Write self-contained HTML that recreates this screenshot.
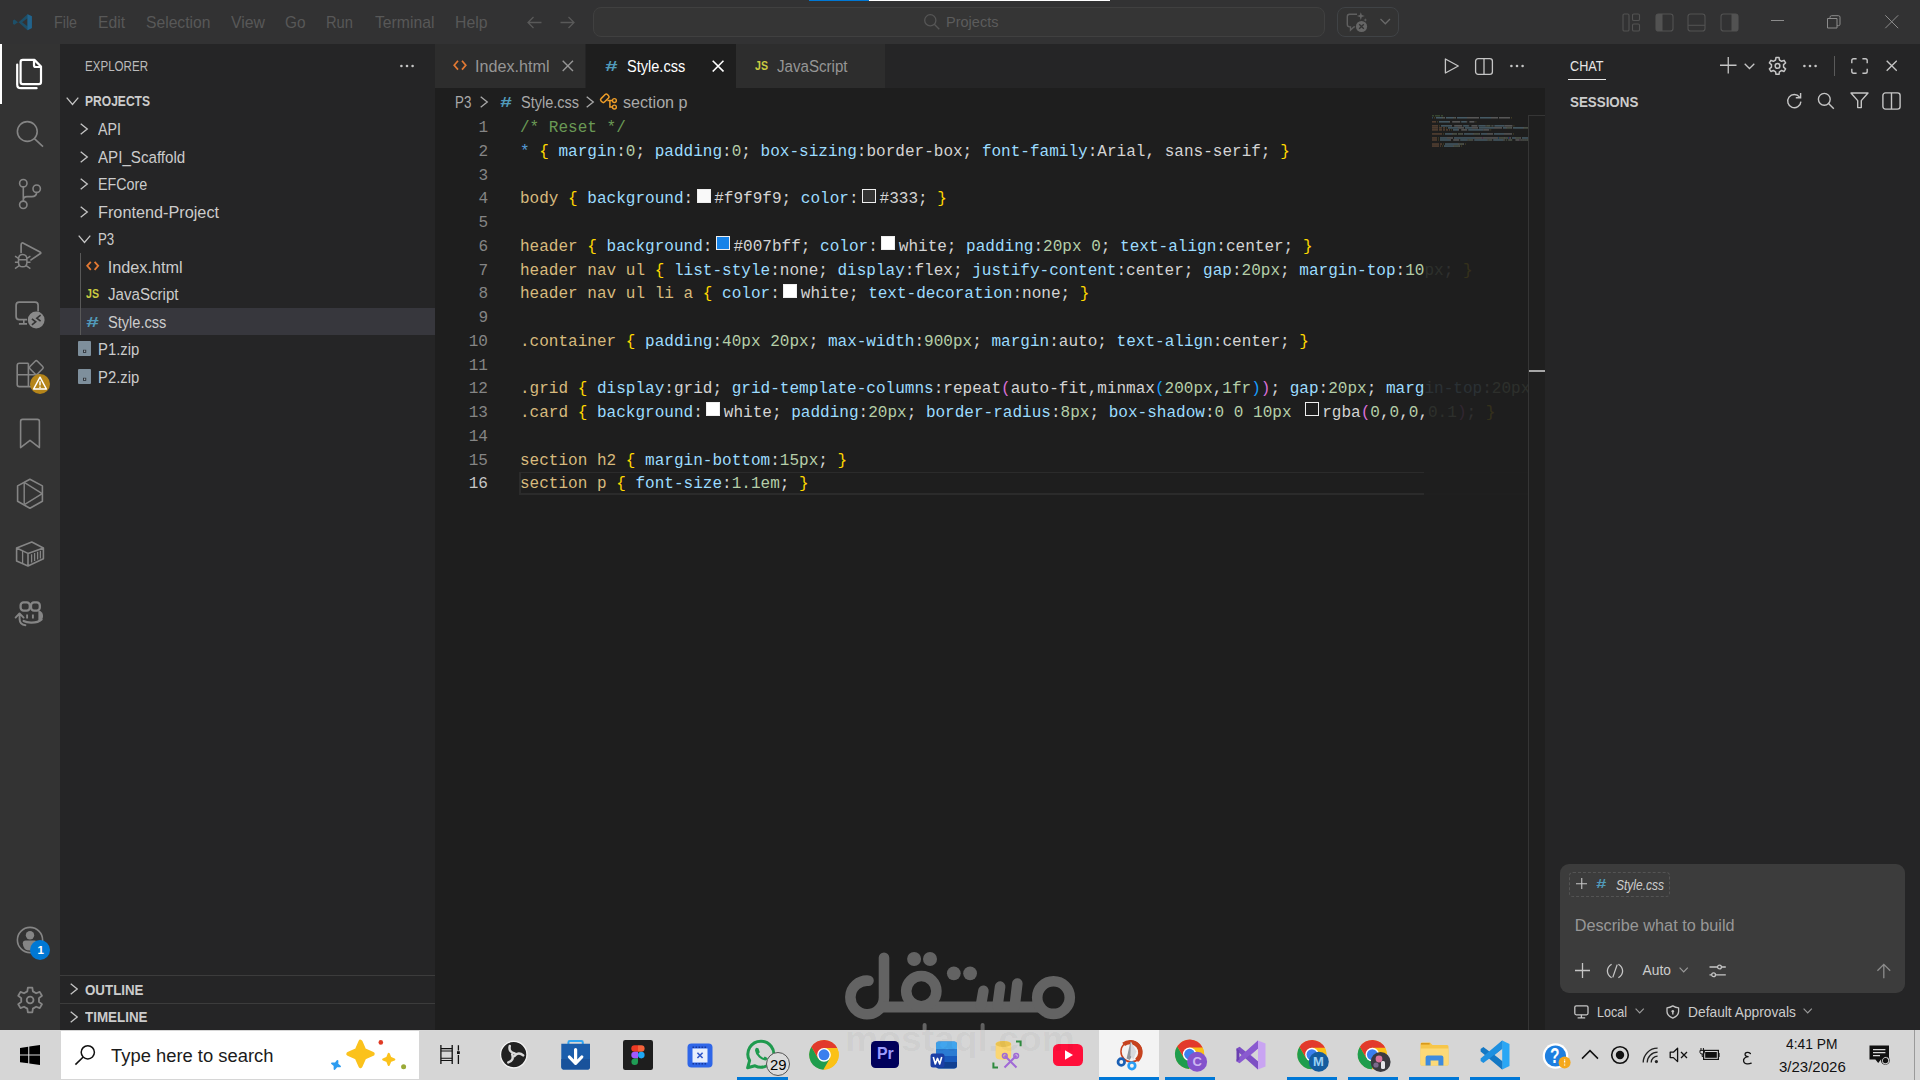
<!DOCTYPE html><html><head><meta charset="utf-8"><title>Style.css - Projects</title><style>
html,body{margin:0;padding:0;background:#1e1e1e;}
body{width:1920px;height:1080px;overflow:hidden;position:relative;font-family:"Liberation Sans",sans-serif;}
.b{position:absolute;display:block;}
.t{position:absolute;white-space:pre;transform-origin:0 50%;font-family:"Liberation Sans",sans-serif;}
.cl{position:absolute;left:520px;white-space:pre;font-family:"Liberation Mono",monospace;font-size:16.04px;line-height:23.75px;height:23.75px;color:#d4d4d4;}
.ln{position:absolute;left:436px;width:52px;text-align:right;font-family:"Liberation Mono",monospace;font-size:16.04px;line-height:23.75px;height:23.75px;}
.sw{display:inline-block;width:14px;height:14px;margin:0 3.5px 0 3.5px;box-sizing:border-box;border:1.2px solid #eee;vertical-align:0.7px;}
.s{color:#d7ba7d}.b_{color:#ffd700}.p{color:#9cdcfe}.d{color:#d4d4d4}.n{color:#b5cea8}.c{color:#6a9955}.w{color:#569cd6}.p1{color:#da70d6}.p2{color:#179fff}
</style></head><body><div class="b" style="left:0px;top:0px;width:1920px;height:44px;background:#323233;"></div><div class="b" style="left:0px;top:44px;width:60px;height:986px;background:#333333;"></div><div class="b" style="left:60px;top:44px;width:375px;height:986px;background:#252526;"></div><div class="b" style="left:435px;top:44px;width:1110px;height:44px;background:#252526;"></div><div class="b" style="left:435px;top:88px;width:1110px;height:942px;background:#1e1e1e;"></div><div class="b" style="left:1545px;top:44px;width:375px;height:986px;background:#252526;"></div><div class="b" style="left:809px;top:0px;width:60px;height:1px;background:#0078d4;"></div><div class="b" style="left:869px;top:0px;width:241px;height:1px;background:#ffffff;"></div><span class="t" style="left:54px;top:11.96px;font-size:16.2px;line-height:21.06px;color:#585858;transform:scaleX(0.8811);">File</span><span class="t" style="left:98px;top:11.96px;font-size:16.2px;line-height:21.06px;color:#585858;transform:scaleX(0.9672);">Edit</span><span class="t" style="left:145.5px;top:11.96px;font-size:16.2px;line-height:21.06px;color:#585858;transform:scaleX(0.9678);">Selection</span><span class="t" style="left:230.5px;top:11.96px;font-size:16.2px;line-height:21.06px;color:#585858;transform:scaleX(0.9764);">View</span><span class="t" style="left:285px;top:11.96px;font-size:16.2px;line-height:21.06px;color:#585858;transform:scaleX(0.9486);">Go</span><span class="t" style="left:326px;top:11.96px;font-size:16.2px;line-height:21.06px;color:#585858;transform:scaleX(0.9085);">Run</span><span class="t" style="left:374.5px;top:11.96px;font-size:16.2px;line-height:21.06px;color:#585858;transform:scaleX(0.9719);">Terminal</span><span class="t" style="left:454.5px;top:11.96px;font-size:16.2px;line-height:21.06px;color:#585858;transform:scaleX(0.9754);">Help</span><svg class="b" style="left:11.7px;top:11.6px;" width="20.8" height="20.4" viewBox="0 0 100 100"><path d="M74.9 10.6 30.2 51.4 11.4 37.1 3.6 41.1v18.2l7.8 3.6 18.8-14.3 44.7 40.8 21.5-10.4V21zM75 30.2v39.6L48.6 50z" fill="#1d4f68" fill-rule="evenodd"/><path d="M74.9 10.6 96.4 21V79L74.9 89.4z" fill="#22638c"/></svg><svg class="b" style="left:526px;top:14px;" width="17" height="17" viewBox="0 0 17 17"><path d="M15.5 8.5H2M7.5 3 2 8.5 7.5 14" fill="none" stroke="#595959" stroke-width="1.3"/></svg><svg class="b" style="left:558.5px;top:14px;" width="17" height="17" viewBox="0 0 17 17"><path d="M1.5 8.5H15M9.5 3 15 8.5 9.5 14" fill="none" stroke="#595959" stroke-width="1.3"/></svg><div class="b" style="left:593.3px;top:7px;width:731.5px;height:30px;background:#353535;border:1px solid #404040;border-radius:8px;box-sizing:border-box;"></div><svg class="b" style="left:922px;top:12px;" width="20" height="20" viewBox="0 0 20 20"><circle cx="8.3" cy="8.3" r="5.6" fill="none" stroke="#565656" stroke-width="1.3"/><path d="M12.3 12.3 17.3 17.3" stroke="#565656" stroke-width="1.3"/></svg><span class="t" style="left:945.5px;top:11.75px;font-size:15.4px;line-height:20.02px;color:#5c5c5c;transform:scaleX(0.9437);">Projects</span><div class="b" style="left:1337px;top:7px;width:62px;height:30px;background:#333333;border:1px solid #404346;border-radius:8px;box-sizing:border-box;"></div><svg class="b" style="left:1345px;top:11px;" width="26" height="22" viewBox="0 0 26 22"><path d="M12 3.3H4.6Q2.3 3.3 2.3 5.6v8q0 2.3 2.3 2.3h.9v3.2l3.4-3.2h1.2" fill="none" stroke="#606060" stroke-width="1.4"/><path d="M15.8 1.2l1 2.9 2.9 1-2.9 1-1 2.9-1-2.9-2.9-1 2.9-1z" fill="#636363"/><path d="M20.3 7.2l.5 1.3 1.3.5-1.3.5-.5 1.3-.5-1.3-1.3-.5 1.3-.5z" fill="#636363"/><circle cx="16.5" cy="15.5" r="5.6" fill="#666666"/><path d="M14.2 13.2l4.6 4.6M18.8 13.2l-4.6 4.6" stroke="#333" stroke-width="1.3"/></svg><svg class="b" style="left:1379px;top:17px;" width="13" height="9" viewBox="0 0 13 9"><path d="M1.5 2 6.3 6.8 11 2" fill="none" stroke="#6a6a6a" stroke-width="1.3"/></svg><svg class="b" style="left:1622px;top:12.5px;" width="19" height="19" viewBox="0 0 19 19"><rect x="1" y="1" width="6" height="17" rx="1.3" fill="none" stroke="#525252" stroke-width="1.1"/><rect x="10.5" y="1" width="7" height="6.5" rx="1.3" fill="none" stroke="#525252" stroke-width="1.1"/><rect x="10.5" y="11" width="7" height="7" rx="1.3" fill="none" stroke="#525252" stroke-width="1.1"/></svg><svg class="b" style="left:1654.5px;top:12.5px;" width="19" height="19" viewBox="0 0 19 19"><rect x="1" y="1" width="17" height="17" rx="2.6" fill="none" stroke="#525252" stroke-width="1.1"/><path d="M3.6 1H7.5V18H3.6Q1 18 1 15.4V3.6Q1 1 3.6 1z" fill="#525252"/></svg><svg class="b" style="left:1687px;top:12.5px;" width="19" height="19" viewBox="0 0 19 19"><rect x="1" y="1" width="17" height="17" rx="2.6" fill="none" stroke="#525252" stroke-width="1.1"/><path d="M1 12.3H18" stroke="#525252" stroke-width="1.1"/></svg><svg class="b" style="left:1719.5px;top:12.5px;" width="19" height="19" viewBox="0 0 19 19"><rect x="1" y="1" width="17" height="17" rx="2.6" fill="none" stroke="#525252" stroke-width="1.1"/><path d="M15.4 1H11.5V18H15.4Q18 18 18 15.4V3.6Q18 1 15.4 1z" fill="#525252"/></svg><div class="b" style="left:1771px;top:20px;width:13px;height:1px;background:#8c8c8c;"></div><svg class="b" style="left:1826px;top:14px;" width="16" height="15" viewBox="0 0 16 15"><path d="M1.5 4.5h9.5v9.5H1.5z" fill="none" stroke="#8c8c8c" stroke-width="1"/><path d="M4 4.5V3.3Q4 1.7 5.6 1.7h6.9q1.5 0 1.5 1.5v7q0 1.5-1.5 1.5H11" fill="none" stroke="#8c8c8c" stroke-width="1"/></svg><svg class="b" style="left:1884px;top:14px;" width="16" height="16" viewBox="0 0 16 16"><path d="M1.3 1.3 14.2 14.2M14.2 1.3 1.3 14.2" stroke="#8c8c8c" stroke-width="1"/></svg><span class="t" style="left:85px;top:57.60px;font-size:13.75px;line-height:17.88px;color:#bbbbbb;transform:scaleX(0.8412);">EXPLORER</span><svg class="b" style="left:397.5px;top:63px;" width="18" height="6" viewBox="0 0 18 6"><circle cx="3.4000000000000004" cy="3" r="1.3" fill="#c5c5c5"/><circle cx="9.0" cy="3" r="1.3" fill="#c5c5c5"/><circle cx="14.6" cy="3" r="1.3" fill="#c5c5c5"/></svg><svg class="b" style="left:66px;top:97.3px;" width="13" height="9.0" viewBox="0 0 13 9.0"><path d="M0.7 0.7 6.5 7.5 12.3 0.7" fill="none" stroke="#c5c5c5" stroke-width="1.3"/></svg><span class="t" style="left:85.3px;top:93.20px;font-size:13.75px;line-height:17.88px;color:#cccccc;font-weight:700;transform:scaleX(0.8770);">PROJECTS</span><div class="b" style="left:60px;top:308px;width:375px;height:27px;background:#37373d;"></div><svg class="b" style="left:80px;top:123.30000000000001px;" width="8.8" height="12" viewBox="0 0 8.8 12"><path d="M0.7 0.7 7.3 6.0 0.7 11.3" fill="none" stroke="#c5c5c5" stroke-width="1.3"/></svg><span class="t" style="left:98px;top:119.21px;font-size:16.25px;line-height:21.12px;color:#cccccc;transform:scaleX(0.8743);">API</span><svg class="b" style="left:80px;top:150.8px;" width="8.8" height="12" viewBox="0 0 8.8 12"><path d="M0.7 0.7 7.3 6.0 0.7 11.3" fill="none" stroke="#c5c5c5" stroke-width="1.3"/></svg><span class="t" style="left:98px;top:146.71px;font-size:16.25px;line-height:21.12px;color:#cccccc;transform:scaleX(0.9321);">API_Scaffold</span><svg class="b" style="left:80px;top:178.3px;" width="8.8" height="12" viewBox="0 0 8.8 12"><path d="M0.7 0.7 7.3 6.0 0.7 11.3" fill="none" stroke="#c5c5c5" stroke-width="1.3"/></svg><span class="t" style="left:98px;top:174.21px;font-size:16.25px;line-height:21.12px;color:#cccccc;transform:scaleX(0.8805);">EFCore</span><svg class="b" style="left:80px;top:205.8px;" width="8.8" height="12" viewBox="0 0 8.8 12"><path d="M0.7 0.7 7.3 6.0 0.7 11.3" fill="none" stroke="#c5c5c5" stroke-width="1.3"/></svg><span class="t" style="left:98px;top:201.71px;font-size:16.25px;line-height:21.12px;color:#cccccc;">Frontend-Project</span><svg class="b" style="left:77.8px;top:235.1px;" width="13" height="9.0" viewBox="0 0 13 9.0"><path d="M0.7 0.7 6.5 7.5 12.3 0.7" fill="none" stroke="#c5c5c5" stroke-width="1.3"/></svg><span class="t" style="left:98.3px;top:229.21px;font-size:16.25px;line-height:21.12px;color:#cccccc;transform:scaleX(0.8150);">P3</span><div class="b" style="left:80px;top:253px;width:1px;height:82px;background:#585858;"></div><svg class="b" style="left:85.5px;top:261.2px;" width="14" height="10" viewBox="0 0 14 10"><path d="M4.8 0.8 1.2 4.8 4.8 8.8M8.6 0.8 12.2 4.8 8.6 8.8" fill="none" stroke="#e37933" stroke-width="1.8"/></svg><span class="t" style="left:107.7px;top:256.71px;font-size:16.25px;line-height:21.12px;color:#cccccc;">Index.html</span><span class="t" style="left:85.8px;top:285.74px;font-size:12.6px;line-height:16.38px;color:#cbcb41;font-weight:700;transform:scaleX(0.8435);">JS</span><span class="t" style="left:107.7px;top:284.21px;font-size:16.25px;line-height:21.12px;color:#cccccc;transform:scaleX(0.9293);">JavaScript</span><span class="t" style="left:85.6px;top:312.15px;font-size:15.5px;line-height:20.15px;color:#519aba;font-weight:700;font-style:italic;transform:scaleX(1.4500);">#</span><span class="t" style="left:107.7px;top:311.71px;font-size:16.25px;line-height:21.12px;color:#cccccc;transform:scaleX(0.8982);">Style.css</span><svg class="b" style="left:78px;top:341.29999999999995px;" width="13" height="15" viewBox="0 0 13 15"><rect x="0" y="0" width="13" height="15" rx="1" fill="#7e8f9c"/><rect x="5" y="8.8" width="3.2" height="3" fill="#2a2f36"/><rect x="5.9" y="9.6" width="1.4" height="1.1" fill="#c8d0d6"/></svg><span class="t" style="left:98.3px;top:339.21px;font-size:16.25px;line-height:21.12px;color:#cccccc;transform:scaleX(0.9122);">P1.zip</span><svg class="b" style="left:78px;top:368.79999999999995px;" width="13" height="15" viewBox="0 0 13 15"><rect x="0" y="0" width="13" height="15" rx="1" fill="#7e8f9c"/><rect x="5" y="8.8" width="3.2" height="3" fill="#2a2f36"/><rect x="5.9" y="9.6" width="1.4" height="1.1" fill="#c8d0d6"/></svg><span class="t" style="left:98.3px;top:366.71px;font-size:16.25px;line-height:21.12px;color:#cccccc;transform:scaleX(0.9122);">P2.zip</span><div class="b" style="left:60px;top:975px;width:375px;height:1px;background:#3c3c3c;"></div><div class="b" style="left:60px;top:1003px;width:375px;height:1px;background:#3c3c3c;"></div><svg class="b" style="left:69.5px;top:983px;" width="8.8" height="12" viewBox="0 0 8.8 12"><path d="M0.7 0.7 7.3 6.0 0.7 11.3" fill="none" stroke="#c5c5c5" stroke-width="1.3"/></svg><span class="t" style="left:85.3px;top:982.00px;font-size:13.75px;line-height:17.88px;color:#cccccc;font-weight:700;transform:scaleX(0.9694);">OUTLINE</span><svg class="b" style="left:69.5px;top:1011px;" width="8.8" height="12" viewBox="0 0 8.8 12"><path d="M0.7 0.7 7.3 6.0 0.7 11.3" fill="none" stroke="#c5c5c5" stroke-width="1.3"/></svg><span class="t" style="left:85.3px;top:1009.20px;font-size:13.75px;line-height:17.88px;color:#cccccc;font-weight:700;transform:scaleX(0.9740);">TIMELINE</span><div class="b" style="left:435px;top:44px;width:151px;height:44px;background:#2d2d2d;"></div><div class="b" style="left:586px;top:44px;width:150px;height:44px;background:#1e1e1e;"></div><div class="b" style="left:735.5px;top:44px;width:149.5px;height:44px;background:#2d2d2d;"></div><div class="b" style="left:585px;top:44px;width:1px;height:44px;background:#252526;"></div><svg class="b" style="left:452.8px;top:60px;" width="14" height="10.5" viewBox="0 0 14 10.5"><path d="M5 0.8 1.2 5.2 5 9.6M9 0.8 12.8 5.2 9 9.6" fill="none" stroke="#e37933" stroke-width="1.7"/></svg><span class="t" style="left:475.3px;top:56.01px;font-size:16.25px;line-height:21.12px;color:#969696;transform:scaleX(0.9938);">Index.html</span><svg class="b" style="left:562px;top:60.3px;" width="11.7" height="11.7" viewBox="0 0 11.7 11.7"><path d="M0.7 0.7 11.0 11.0M11.0 0.7 0.7 11.0" stroke="#969696" stroke-width="1.4"/></svg><span class="t" style="left:604.8px;top:56.45px;font-size:15.5px;line-height:20.15px;color:#519aba;font-weight:700;font-style:italic;transform:scaleX(1.4152);">#</span><span class="t" style="left:626.7px;top:56.01px;font-size:16.25px;line-height:21.12px;color:#ffffff;transform:scaleX(0.8952);">Style.css</span><svg class="b" style="left:712px;top:60px;" width="12.2" height="12.2" viewBox="0 0 12.2 12.2"><path d="M0.7 0.7 11.5 11.5M11.5 0.7 0.7 11.5" stroke="#ffffff" stroke-width="1.6"/></svg><span class="t" style="left:754.5px;top:57.74px;font-size:12.6px;line-height:16.38px;color:#cbcb41;font-weight:700;transform:scaleX(0.8435);">JS</span><span class="t" style="left:776.7px;top:56.01px;font-size:16.25px;line-height:21.12px;color:#969696;transform:scaleX(0.9293);">JavaScript</span><svg class="b" style="left:1443px;top:57px;" width="18" height="18" viewBox="0 0 18 18"><path d="M2.4 2 15.3 9 2.4 16z" fill="none" stroke="#c5c5c5" stroke-width="1.3" stroke-linejoin="round"/></svg><svg class="b" style="left:1474px;top:56.5px;" width="20" height="19" viewBox="0 0 20 19"><rect x="1.6" y="1.6" width="16.8" height="15.8" rx="2.6" fill="none" stroke="#c5c5c5" stroke-width="1.3"/><path d="M10 1.6V17.4" stroke="#c5c5c5" stroke-width="1.3"/></svg><svg class="b" style="left:1507.5px;top:63px;" width="18" height="6" viewBox="0 0 18 6"><circle cx="3.4000000000000004" cy="3" r="1.3" fill="#c5c5c5"/><circle cx="9.0" cy="3" r="1.3" fill="#c5c5c5"/><circle cx="14.6" cy="3" r="1.3" fill="#c5c5c5"/></svg><span class="t" style="left:455.3px;top:91.91px;font-size:16.25px;line-height:21.12px;color:#a9a9a9;transform:scaleX(0.8200);">P3</span><svg class="b" style="left:480.3px;top:96.3px;" width="8.8" height="12" viewBox="0 0 8.8 12"><path d="M0.7 0.7 7.3 6.0 0.7 11.3" fill="none" stroke="#a9a9a9" stroke-width="1.3"/></svg><span class="t" style="left:499.5px;top:92.35px;font-size:15.5px;line-height:20.15px;color:#519aba;font-weight:700;font-style:italic;transform:scaleX(1.3340);">#</span><span class="t" style="left:520.8px;top:91.91px;font-size:16.25px;line-height:21.12px;color:#a9a9a9;transform:scaleX(0.8921);">Style.css</span><svg class="b" style="left:586px;top:96.3px;" width="8.8" height="12" viewBox="0 0 8.8 12"><path d="M0.7 0.7 7.3 6.0 0.7 11.3" fill="none" stroke="#a9a9a9" stroke-width="1.3"/></svg><svg class="b" style="left:598px;top:90.8px;" width="22" height="22" viewBox="0 0 22 22"><rect x="2.3" y="4.9" width="9" height="4.8" rx="1.6" transform="rotate(-45 6.8 7.3)" fill="none" stroke="#ee9d28" stroke-width="1.5"/><path d="M9.4 9.4H14.3M11.9 9.4V16.1H14.3" fill="none" stroke="#ee9d28" stroke-width="1.5"/><circle cx="16.4" cy="9.6" r="1.95" fill="none" stroke="#ee9d28" stroke-width="1.4"/><circle cx="16.4" cy="16.1" r="1.95" fill="none" stroke="#ee9d28" stroke-width="1.4"/></svg><span class="t" style="left:623px;top:91.91px;font-size:16.25px;line-height:21.12px;color:#a9a9a9;transform:scaleX(0.9917);">section p</span><div class="b" style="left:0;top:88px;width:1528px;height:942px;overflow:hidden"><div style="position:absolute;left:0;top:-88px"><span class="ln" style="top:117.10px;color:#858585">1</span><div class="cl" style="top:117.10px"><span class="c">/* Reset */</span></div><span class="ln" style="top:140.85px;color:#858585">2</span><div class="cl" style="top:140.85px"><span class="w">*</span><span class="d"> </span><span class="b_">{</span><span class="d"> </span><span class="p">margin</span><span class="d">:</span><span class="n">0</span><span class="d">; </span><span class="p">padding</span><span class="d">:</span><span class="n">0</span><span class="d">; </span><span class="p">box-sizing</span><span class="d">:border-box; </span><span class="p">font-family</span><span class="d">:Arial, sans-serif; </span><span class="b_">}</span></div><span class="ln" style="top:164.60px;color:#858585">3</span><span class="ln" style="top:188.35px;color:#858585">4</span><div class="cl" style="top:188.35px"><span class="s">body </span><span class="b_">{</span><span class="d"> </span><span class="p">background</span><span class="d">:</span><i class="sw" style="background:#f9f9f9"></i><span class="d">#f9f9f9; </span><span class="p">color</span><span class="d">:</span><i class="sw" style="background:#333333"></i><span class="d">#333; </span><span class="b_">}</span></div><span class="ln" style="top:212.10px;color:#858585">5</span><span class="ln" style="top:235.85px;color:#858585">6</span><div class="cl" style="top:235.85px"><span class="s">header </span><span class="b_">{</span><span class="d"> </span><span class="p">background</span><span class="d">:</span><i class="sw" style="background:#1783e8"></i><span class="d">#007bff; </span><span class="p">color</span><span class="d">:</span><i class="sw" style="background:#ffffff"></i><span class="d">white; </span><span class="p">padding</span><span class="d">:</span><span class="n">20px 0</span><span class="d">; </span><span class="p">text-align</span><span class="d">:center; </span><span class="b_">}</span></div><span class="ln" style="top:259.60px;color:#858585">7</span><div class="cl" style="top:259.60px"><span class="s">header nav ul </span><span class="b_">{</span><span class="d"> </span><span class="p">list-style</span><span class="d">:none; </span><span class="p">display</span><span class="d">:flex; </span><span class="p">justify-content</span><span class="d">:center; </span><span class="p">gap</span><span class="d">:</span><span class="n">20px</span><span class="d">; </span><span class="p">margin-top</span><span class="d">:</span><span class="n">10px</span><span class="d">; </span><span class="b_">}</span></div><span class="ln" style="top:283.35px;color:#858585">8</span><div class="cl" style="top:283.35px"><span class="s">header nav ul li a </span><span class="b_">{</span><span class="d"> </span><span class="p">color</span><span class="d">:</span><i class="sw" style="background:#ffffff"></i><span class="d">white; </span><span class="p">text-decoration</span><span class="d">:none; </span><span class="b_">}</span></div><span class="ln" style="top:307.10px;color:#858585">9</span><span class="ln" style="top:330.85px;color:#858585">10</span><div class="cl" style="top:330.85px"><span class="s">.container </span><span class="b_">{</span><span class="d"> </span><span class="p">padding</span><span class="d">:</span><span class="n">40px 20px</span><span class="d">; </span><span class="p">max-width</span><span class="d">:</span><span class="n">900px</span><span class="d">; </span><span class="p">margin</span><span class="d">:auto; </span><span class="p">text-align</span><span class="d">:center; </span><span class="b_">}</span></div><span class="ln" style="top:354.60px;color:#858585">11</span><span class="ln" style="top:378.35px;color:#858585">12</span><div class="cl" style="top:378.35px"><span class="s">.grid </span><span class="b_">{</span><span class="d"> </span><span class="p">display</span><span class="d">:grid; </span><span class="p">grid-template-columns</span><span class="d">:repeat</span><span class="p1">(</span><span class="d">auto-fit,minmax</span><span class="p2">(</span><span class="n">200px</span><span class="d">,</span><span class="n">1fr</span><span class="p2">)</span><span class="p1">)</span><span class="d">; </span><span class="p">gap</span><span class="d">:</span><span class="n">20px</span><span class="d">; </span><span class="p">margin-top</span><span class="d">:</span><span class="n">20px</span><span class="d">; </span><span class="b_">}</span></div><span class="ln" style="top:402.10px;color:#858585">13</span><div class="cl" style="top:402.10px"><span class="s">.card </span><span class="b_">{</span><span class="d"> </span><span class="p">background</span><span class="d">:</span><i class="sw" style="background:#ffffff"></i><span class="d">white; </span><span class="p">padding</span><span class="d">:</span><span class="n">20px</span><span class="d">; </span><span class="p">border-radius</span><span class="d">:</span><span class="n">8px</span><span class="d">; </span><span class="p">box-shadow</span><span class="d">:</span><span class="n">0 0 10px</span><span class="d"> </span><i class="sw" style="background:#1e1e1e"></i><span class="d">rgba</span><span class="p1">(</span><span class="n">0</span><span class="d">,</span><span class="n">0</span><span class="d">,</span><span class="n">0</span><span class="d">,</span><span class="n">0.1</span><span class="p1">)</span><span class="d">; </span><span class="b_">}</span></div><span class="ln" style="top:425.85px;color:#858585">14</span><span class="ln" style="top:449.60px;color:#858585">15</span><div class="cl" style="top:449.60px"><span class="s">section h2 </span><span class="b_">{</span><span class="d"> </span><span class="p">margin-bottom</span><span class="d">:</span><span class="n">15px</span><span class="d">; </span><span class="b_">}</span></div><span class="ln" style="top:473.35px;color:#c6c6c6">16</span><div class="cl" style="top:473.35px"><span class="s">section p </span><span class="b_">{</span><span class="d"> </span><span class="p">font-size</span><span class="d">:</span><span class="n">1.1em</span><span class="d">; </span><span class="b_">}</span></div></div></div><div class="b" style="left:519px;top:471.6px;width:1009px;height:1.6px;background:#2b2b2b;"></div><div class="b" style="left:519px;top:493.4px;width:1009px;height:1.6px;background:#2b2b2b;"></div><div class="b" style="left:519px;top:471.6px;width:1.6px;height:23.4px;background:#2b2b2b;"></div><div class="b" style="left:1424px;top:115.5px;width:104px;height:914.5px;background:rgba(30,30,30,0.9);"></div><div class="b" style="left:1528px;top:115.5px;width:17px;height:914.5px;background:#1f1f1f;"></div><div class="b" style="left:1528px;top:115.5px;width:1px;height:914.5px;background:#353535;"></div><div class="b" style="left:1528px;top:115px;width:17px;height:1px;background:#353535;"></div><div class="b" style="left:1529px;top:370px;width:16px;height:2.2px;background:#a6a6a6;"></div><svg class="b" style="left:1432px;top:115.2px;opacity:.32;" width="96" height="34" viewBox="0 0 96 34"><rect x="0.0" y="0.00" width="2.0" height="1.5" fill="#6a9955"/><rect x="3.0" y="0.00" width="5.0" height="1.5" fill="#6a9955"/><rect x="9.0" y="0.00" width="2.0" height="1.5" fill="#6a9955"/><rect x="0.0" y="2.02" width="1.0" height="1.5" fill="#569cd6"/><rect x="2.0" y="2.02" width="1.0" height="1.5" fill="#8a7a30"/><rect x="4.0" y="2.02" width="6.0" height="1.5" fill="#9cdcfe"/><rect x="10.0" y="2.02" width="1.0" height="1.5" fill="#d4d4d4"/><rect x="11.0" y="2.02" width="1.0" height="1.5" fill="#b5cea8"/><rect x="12.0" y="2.02" width="1.0" height="1.5" fill="#d4d4d4"/><rect x="14.0" y="2.02" width="7.0" height="1.5" fill="#9cdcfe"/><rect x="21.0" y="2.02" width="1.0" height="1.5" fill="#d4d4d4"/><rect x="22.0" y="2.02" width="1.0" height="1.5" fill="#b5cea8"/><rect x="23.0" y="2.02" width="1.0" height="1.5" fill="#d4d4d4"/><rect x="25.0" y="2.02" width="10.0" height="1.5" fill="#9cdcfe"/><rect x="35.0" y="2.02" width="12.0" height="1.5" fill="#d4d4d4"/><rect x="48.0" y="2.02" width="11.0" height="1.5" fill="#9cdcfe"/><rect x="59.0" y="2.02" width="7.0" height="1.5" fill="#d4d4d4"/><rect x="67.0" y="2.02" width="11.0" height="1.5" fill="#d4d4d4"/><rect x="79.0" y="2.02" width="1.0" height="1.5" fill="#8a7a30"/><rect x="0.0" y="6.06" width="4.0" height="1.5" fill="#c98a5e"/><rect x="5.0" y="6.06" width="1.0" height="1.5" fill="#8a7a30"/><rect x="7.0" y="6.06" width="10.0" height="1.5" fill="#9cdcfe"/><rect x="17.0" y="6.06" width="1.0" height="1.5" fill="#d4d4d4"/><rect x="20.2" y="6.06" width="8.0" height="1.5" fill="#d4d4d4"/><rect x="29.2" y="6.06" width="5.0" height="1.5" fill="#9cdcfe"/><rect x="34.2" y="6.06" width="1.0" height="1.5" fill="#d4d4d4"/><rect x="37.4" y="6.06" width="5.0" height="1.5" fill="#d4d4d4"/><rect x="43.4" y="6.06" width="1.0" height="1.5" fill="#8a7a30"/><rect x="0.0" y="10.10" width="6.0" height="1.5" fill="#c98a5e"/><rect x="7.0" y="10.10" width="1.0" height="1.5" fill="#8a7a30"/><rect x="9.0" y="10.10" width="10.0" height="1.5" fill="#9cdcfe"/><rect x="19.0" y="10.10" width="1.0" height="1.5" fill="#d4d4d4"/><rect x="22.2" y="10.10" width="8.0" height="1.5" fill="#d4d4d4"/><rect x="31.2" y="10.10" width="5.0" height="1.5" fill="#9cdcfe"/><rect x="36.2" y="10.10" width="1.0" height="1.5" fill="#d4d4d4"/><rect x="39.4" y="10.10" width="6.0" height="1.5" fill="#d4d4d4"/><rect x="46.4" y="10.10" width="7.0" height="1.5" fill="#9cdcfe"/><rect x="53.4" y="10.10" width="1.0" height="1.5" fill="#d4d4d4"/><rect x="54.4" y="10.10" width="4.0" height="1.5" fill="#b5cea8"/><rect x="59.4" y="10.10" width="1.0" height="1.5" fill="#b5cea8"/><rect x="60.4" y="10.10" width="1.0" height="1.5" fill="#d4d4d4"/><rect x="62.4" y="10.10" width="10.0" height="1.5" fill="#9cdcfe"/><rect x="72.4" y="10.10" width="8.0" height="1.5" fill="#d4d4d4"/><rect x="81.4" y="10.10" width="1.0" height="1.5" fill="#8a7a30"/><rect x="0.0" y="12.12" width="6.0" height="1.5" fill="#c98a5e"/><rect x="7.0" y="12.12" width="3.0" height="1.5" fill="#c98a5e"/><rect x="11.0" y="12.12" width="2.0" height="1.5" fill="#c98a5e"/><rect x="14.0" y="12.12" width="1.0" height="1.5" fill="#8a7a30"/><rect x="16.0" y="12.12" width="10.0" height="1.5" fill="#9cdcfe"/><rect x="26.0" y="12.12" width="6.0" height="1.5" fill="#d4d4d4"/><rect x="33.0" y="12.12" width="7.0" height="1.5" fill="#9cdcfe"/><rect x="40.0" y="12.12" width="6.0" height="1.5" fill="#d4d4d4"/><rect x="47.0" y="12.12" width="15.0" height="1.5" fill="#9cdcfe"/><rect x="62.0" y="12.12" width="8.0" height="1.5" fill="#d4d4d4"/><rect x="71.0" y="12.12" width="3.0" height="1.5" fill="#9cdcfe"/><rect x="74.0" y="12.12" width="1.0" height="1.5" fill="#d4d4d4"/><rect x="75.0" y="12.12" width="4.0" height="1.5" fill="#b5cea8"/><rect x="79.0" y="12.12" width="1.0" height="1.5" fill="#d4d4d4"/><rect x="81.0" y="12.12" width="10.0" height="1.5" fill="#9cdcfe"/><rect x="91.0" y="12.12" width="1.0" height="1.5" fill="#d4d4d4"/><rect x="92.0" y="12.12" width="4.0" height="1.5" fill="#b5cea8"/><rect x="0.0" y="14.14" width="6.0" height="1.5" fill="#c98a5e"/><rect x="7.0" y="14.14" width="3.0" height="1.5" fill="#c98a5e"/><rect x="11.0" y="14.14" width="2.0" height="1.5" fill="#c98a5e"/><rect x="14.0" y="14.14" width="2.0" height="1.5" fill="#c98a5e"/><rect x="17.0" y="14.14" width="1.0" height="1.5" fill="#c98a5e"/><rect x="19.0" y="14.14" width="1.0" height="1.5" fill="#8a7a30"/><rect x="21.0" y="14.14" width="5.0" height="1.5" fill="#9cdcfe"/><rect x="26.0" y="14.14" width="1.0" height="1.5" fill="#d4d4d4"/><rect x="29.2" y="14.14" width="6.0" height="1.5" fill="#d4d4d4"/><rect x="36.2" y="14.14" width="15.0" height="1.5" fill="#9cdcfe"/><rect x="51.2" y="14.14" width="6.0" height="1.5" fill="#d4d4d4"/><rect x="58.2" y="14.14" width="1.0" height="1.5" fill="#8a7a30"/><rect x="0.0" y="18.18" width="10.0" height="1.5" fill="#c98a5e"/><rect x="11.0" y="18.18" width="1.0" height="1.5" fill="#8a7a30"/><rect x="13.0" y="18.18" width="7.0" height="1.5" fill="#9cdcfe"/><rect x="20.0" y="18.18" width="1.0" height="1.5" fill="#d4d4d4"/><rect x="21.0" y="18.18" width="4.0" height="1.5" fill="#b5cea8"/><rect x="26.0" y="18.18" width="4.0" height="1.5" fill="#b5cea8"/><rect x="30.0" y="18.18" width="1.0" height="1.5" fill="#d4d4d4"/><rect x="32.0" y="18.18" width="9.0" height="1.5" fill="#9cdcfe"/><rect x="41.0" y="18.18" width="1.0" height="1.5" fill="#d4d4d4"/><rect x="42.0" y="18.18" width="5.0" height="1.5" fill="#b5cea8"/><rect x="47.0" y="18.18" width="1.0" height="1.5" fill="#d4d4d4"/><rect x="49.0" y="18.18" width="6.0" height="1.5" fill="#9cdcfe"/><rect x="55.0" y="18.18" width="6.0" height="1.5" fill="#d4d4d4"/><rect x="62.0" y="18.18" width="10.0" height="1.5" fill="#9cdcfe"/><rect x="72.0" y="18.18" width="8.0" height="1.5" fill="#d4d4d4"/><rect x="81.0" y="18.18" width="1.0" height="1.5" fill="#8a7a30"/><rect x="0.0" y="22.22" width="5.0" height="1.5" fill="#c98a5e"/><rect x="6.0" y="22.22" width="1.0" height="1.5" fill="#8a7a30"/><rect x="8.0" y="22.22" width="7.0" height="1.5" fill="#9cdcfe"/><rect x="15.0" y="22.22" width="6.0" height="1.5" fill="#d4d4d4"/><rect x="22.0" y="22.22" width="21.0" height="1.5" fill="#9cdcfe"/><rect x="43.0" y="22.22" width="7.0" height="1.5" fill="#d4d4d4"/><rect x="50.0" y="22.22" width="1.0" height="1.5" fill="#da70d6"/><rect x="51.0" y="22.22" width="15.0" height="1.5" fill="#d4d4d4"/><rect x="66.0" y="22.22" width="1.0" height="1.5" fill="#179fff"/><rect x="67.0" y="22.22" width="5.0" height="1.5" fill="#b5cea8"/><rect x="72.0" y="22.22" width="1.0" height="1.5" fill="#d4d4d4"/><rect x="73.0" y="22.22" width="3.0" height="1.5" fill="#b5cea8"/><rect x="76.0" y="22.22" width="1.0" height="1.5" fill="#179fff"/><rect x="77.0" y="22.22" width="1.0" height="1.5" fill="#da70d6"/><rect x="78.0" y="22.22" width="1.0" height="1.5" fill="#d4d4d4"/><rect x="80.0" y="22.22" width="3.0" height="1.5" fill="#9cdcfe"/><rect x="83.0" y="22.22" width="1.0" height="1.5" fill="#d4d4d4"/><rect x="84.0" y="22.22" width="4.0" height="1.5" fill="#b5cea8"/><rect x="88.0" y="22.22" width="1.0" height="1.5" fill="#d4d4d4"/><rect x="90.0" y="22.22" width="6.0" height="1.5" fill="#9cdcfe"/><rect x="0.0" y="24.24" width="5.0" height="1.5" fill="#c98a5e"/><rect x="6.0" y="24.24" width="1.0" height="1.5" fill="#8a7a30"/><rect x="8.0" y="24.24" width="10.0" height="1.5" fill="#9cdcfe"/><rect x="18.0" y="24.24" width="1.0" height="1.5" fill="#d4d4d4"/><rect x="21.2" y="24.24" width="6.0" height="1.5" fill="#d4d4d4"/><rect x="28.2" y="24.24" width="7.0" height="1.5" fill="#9cdcfe"/><rect x="35.2" y="24.24" width="1.0" height="1.5" fill="#d4d4d4"/><rect x="36.2" y="24.24" width="4.0" height="1.5" fill="#b5cea8"/><rect x="40.2" y="24.24" width="1.0" height="1.5" fill="#d4d4d4"/><rect x="42.2" y="24.24" width="13.0" height="1.5" fill="#9cdcfe"/><rect x="55.2" y="24.24" width="1.0" height="1.5" fill="#d4d4d4"/><rect x="56.2" y="24.24" width="3.0" height="1.5" fill="#b5cea8"/><rect x="59.2" y="24.24" width="1.0" height="1.5" fill="#d4d4d4"/><rect x="61.2" y="24.24" width="10.0" height="1.5" fill="#9cdcfe"/><rect x="71.2" y="24.24" width="1.0" height="1.5" fill="#d4d4d4"/><rect x="72.2" y="24.24" width="1.0" height="1.5" fill="#b5cea8"/><rect x="74.2" y="24.24" width="1.0" height="1.5" fill="#b5cea8"/><rect x="76.2" y="24.24" width="4.0" height="1.5" fill="#b5cea8"/><rect x="83.4" y="24.24" width="4.0" height="1.5" fill="#d4d4d4"/><rect x="87.4" y="24.24" width="1.0" height="1.5" fill="#da70d6"/><rect x="88.4" y="24.24" width="1.0" height="1.5" fill="#b5cea8"/><rect x="89.4" y="24.24" width="1.0" height="1.5" fill="#d4d4d4"/><rect x="90.4" y="24.24" width="1.0" height="1.5" fill="#b5cea8"/><rect x="91.4" y="24.24" width="1.0" height="1.5" fill="#d4d4d4"/><rect x="92.4" y="24.24" width="1.0" height="1.5" fill="#b5cea8"/><rect x="93.4" y="24.24" width="1.0" height="1.5" fill="#d4d4d4"/><rect x="94.4" y="24.24" width="1.6" height="1.5" fill="#b5cea8"/><rect x="0.0" y="28.28" width="7.0" height="1.5" fill="#c98a5e"/><rect x="8.0" y="28.28" width="2.0" height="1.5" fill="#c98a5e"/><rect x="11.0" y="28.28" width="1.0" height="1.5" fill="#8a7a30"/><rect x="13.0" y="28.28" width="13.0" height="1.5" fill="#9cdcfe"/><rect x="26.0" y="28.28" width="1.0" height="1.5" fill="#d4d4d4"/><rect x="27.0" y="28.28" width="4.0" height="1.5" fill="#b5cea8"/><rect x="31.0" y="28.28" width="1.0" height="1.5" fill="#d4d4d4"/><rect x="33.0" y="28.28" width="1.0" height="1.5" fill="#8a7a30"/><rect x="0.0" y="30.30" width="7.0" height="1.5" fill="#c98a5e"/><rect x="8.0" y="30.30" width="1.0" height="1.5" fill="#c98a5e"/><rect x="10.0" y="30.30" width="1.0" height="1.5" fill="#8a7a30"/><rect x="12.0" y="30.30" width="9.0" height="1.5" fill="#9cdcfe"/><rect x="21.0" y="30.30" width="1.0" height="1.5" fill="#d4d4d4"/><rect x="22.0" y="30.30" width="5.0" height="1.5" fill="#b5cea8"/><rect x="27.0" y="30.30" width="1.0" height="1.5" fill="#d4d4d4"/><rect x="29.0" y="30.30" width="1.0" height="1.5" fill="#8a7a30"/></svg><span class="t" style="left:1570px;top:57.60px;font-size:13.75px;line-height:17.88px;color:#e7e7e7;transform:scaleX(0.9201);">CHAT</span><div class="b" style="left:1568px;top:79px;width:38px;height:1.2px;background:#e7e7e7;"></div><svg class="b" style="left:1720.25px;top:57.05px;" width="16.5" height="16.5" viewBox="0 0 16.5 16.5"><path d="M8.25 0V16.5M0 8.25H16.5" stroke="#c5c5c5" stroke-width="1.3"/></svg><svg class="b" style="left:1743.5px;top:62.5px;" width="11" height="7" viewBox="0 0 11 7"><path d="M0.7 0.7 5.5 5.5 10.3 0.7" fill="none" stroke="#c5c5c5" stroke-width="1.3"/></svg><svg class="b" style="left:1766px;top:55px;" width="23" height="22" viewBox="0 0 23 22"><path d="M9.59 5.01 L9.98 2.44 L13.02 2.44 L13.41 5.01 L15.64 6.30 L18.07 5.35 L19.59 7.99 L17.56 9.61 L17.56 12.19 L19.59 13.81 L18.07 16.45 L15.64 15.50 L13.41 16.79 L13.02 19.36 L9.98 19.36 L9.59 16.79 L7.36 15.50 L4.93 16.45 L3.41 13.81 L5.44 12.19 L5.44 9.61 L3.41 7.99 L4.93 5.35 L7.36 6.30z" fill="none" stroke="#c5c5c5" stroke-width="1.5" stroke-linejoin="round"/><circle cx="11.5" cy="10.9" r="2.32" fill="none" stroke="#c5c5c5" stroke-width="1.5"/></svg><svg class="b" style="left:1801px;top:63px;" width="18" height="6" viewBox="0 0 18 6"><circle cx="3.4000000000000004" cy="3" r="1.3" fill="#c5c5c5"/><circle cx="9.0" cy="3" r="1.3" fill="#c5c5c5"/><circle cx="14.6" cy="3" r="1.3" fill="#c5c5c5"/></svg><div class="b" style="left:1834px;top:56px;width:1px;height:20px;background:#5a5a5a;"></div><svg class="b" style="left:1850.5px;top:57.5px;" width="17" height="16" viewBox="0 0 17 16"><path d="M0.8 5.2V2.6Q0.8 0.8 2.6 0.8H5.6M11.4 0.8H14.4Q16.2 0.8 16.2 2.6V5.2M16.2 10.8V13.4Q16.2 15.2 14.4 15.2H11.4M5.6 15.2H2.6Q0.8 15.2 0.8 13.4V10.8" fill="none" stroke="#c5c5c5" stroke-width="1.4"/></svg><svg class="b" style="left:1885.5px;top:60.3px;" width="11.5" height="11.5" viewBox="0 0 11.5 11.5"><path d="M0.7 0.7 10.8 10.8M10.8 0.7 0.7 10.8" stroke="#c5c5c5" stroke-width="1.4"/></svg><span class="t" style="left:1570px;top:94.10px;font-size:13.75px;line-height:17.88px;color:#cccccc;font-weight:700;transform:scaleX(0.9715);">SESSIONS</span><svg class="b" style="left:1785px;top:92px;" width="18" height="18" viewBox="0 0 18 18"><path d="M14.6 5.2A6.6 6.6 0 1 0 15.9 9.6" fill="none" stroke="#c5c5c5" stroke-width="1.4"/><path d="M15.6 1V5.8H10.8" fill="none" stroke="#c5c5c5" stroke-width="1.4"/></svg><svg class="b" style="left:1817px;top:91.5px;" width="18" height="18" viewBox="0 0 18 18"><circle cx="7.3" cy="7.3" r="5.9" fill="none" stroke="#c5c5c5" stroke-width="1.4"/><path d="M11.6 11.6 16.8 16.8" stroke="#c5c5c5" stroke-width="1.4"/></svg><svg class="b" style="left:1849.5px;top:92px;" width="19" height="17" viewBox="0 0 19 17"><path d="M1 1H18L11.3 8.6V15.6H7.7V8.6z" fill="none" stroke="#c5c5c5" stroke-width="1.4" stroke-linejoin="round"/></svg><svg class="b" style="left:1882px;top:92px;" width="19" height="18" viewBox="0 0 19 18"><rect x="0.9" y="0.9" width="17.2" height="16.2" rx="2.6" fill="none" stroke="#c5c5c5" stroke-width="1.4"/><path d="M9.5 0.9V17.1" stroke="#c5c5c5" stroke-width="1.4"/></svg><div class="b" style="left:1560px;top:864px;width:345px;height:129px;background:#3c3c3c;border-radius:9px;"></div><div class="b" style="left:1569.3px;top:872px;width:100.5px;height:25px;border:1px dashed #545454;border-radius:4px;box-sizing:border-box;"></div><svg class="b" style="left:1575.55px;top:877.65px;" width="11.5" height="11.5" viewBox="0 0 11.5 11.5"><path d="M5.75 0V11.5M0 5.75H11.5" stroke="#c5c5c5" stroke-width="1.1"/></svg><span class="t" style="left:1596.2px;top:876.05px;font-size:13px;line-height:16.9px;color:#519aba;font-weight:700;font-style:italic;transform:scaleX(1.3831);">#</span><span class="t" style="left:1616px;top:876.25px;font-size:14.6px;line-height:18.98px;color:#cccccc;font-style:italic;transform:scaleX(0.8217);">Style.css</span><span class="t" style="left:1574.7px;top:915.01px;font-size:16.25px;line-height:21.12px;color:#989898;">Describe what to build</span><svg class="b" style="left:1574.5px;top:962.5px;" width="15" height="15" viewBox="0 0 15 15"><path d="M7.5 0V15M0 7.5H15" stroke="#c5c5c5" stroke-width="1.3"/></svg><svg class="b" style="left:1606px;top:962.5px;" width="18" height="16" viewBox="0 0 18 16"><path d="M5.6 1.2Q1.4 4 1.4 8T5.6 14.8M12.4 1.2Q16.6 4 16.6 8T12.4 14.8M11.2 1.6 6.8 14.4" fill="none" stroke="#c5c5c5" stroke-width="1.3"/></svg><span class="t" style="left:1642.6px;top:962.40px;font-size:13.75px;line-height:17.88px;color:#cccccc;">Auto</span><svg class="b" style="left:1679px;top:967.3px;" width="10" height="6.5" viewBox="0 0 10 6.5"><path d="M0.6 0.7 4.7 4.8 8.8 0.7" fill="none" stroke="#9a9a9a" stroke-width="1.2"/></svg><svg class="b" style="left:1708.5px;top:963px;" width="18" height="16" viewBox="0 0 18 16"><path d="M0.5 4H8.6M12.4 4H16.8M0.5 11.8H2.6M6.6 11.8H16.8" stroke="#c5c5c5" stroke-width="1.3"/><circle cx="10.5" cy="4" r="1.9" fill="none" stroke="#c5c5c5" stroke-width="1.3"/><circle cx="4.6" cy="11.8" r="1.9" fill="none" stroke="#c5c5c5" stroke-width="1.3"/></svg><svg class="b" style="left:1876px;top:963px;" width="16" height="16" viewBox="0 0 16 16"><path d="M7.8 15.2V1.6M1.4 7.8 7.8 1.4 14.2 7.8" fill="none" stroke="#8c8c8c" stroke-width="1.3"/></svg><svg class="b" style="left:1574px;top:1004.8px;" width="15" height="14" viewBox="0 0 15 14"><rect x="0.8" y="0.8" width="13.2" height="9" rx="1.5" fill="none" stroke="#c5c5c5" stroke-width="1.3"/><path d="M7.4 9.8V12.6M3.6 12.8H11.2" stroke="#c5c5c5" stroke-width="1.3"/></svg><span class="t" style="left:1597px;top:1003.60px;font-size:13.75px;line-height:17.88px;color:#cccccc;transform:scaleX(0.9126);">Local</span><svg class="b" style="left:1634.6px;top:1007.8px;" width="10" height="6.5" viewBox="0 0 10 6.5"><path d="M0.6 0.7 4.7 4.8 8.8 0.7" fill="none" stroke="#9a9a9a" stroke-width="1.2"/></svg><svg class="b" style="left:1666px;top:1005px;" width="14" height="14" viewBox="0 0 14 14"><path d="M6.8 0.9Q9.6 2.6 12.6 2.8V6.6Q12.4 10.8 6.8 13.1Q1.2 10.8 1 6.6V2.8Q4 2.6 6.8 0.9z" fill="none" stroke="#c5c5c5" stroke-width="1.3" stroke-linejoin="round"/><circle cx="6.8" cy="6.2" r="1.3" fill="#c5c5c5"/><path d="M6.8 6.4V9.4" stroke="#c5c5c5" stroke-width="1.4"/></svg><span class="t" style="left:1688.1px;top:1003.60px;font-size:13.75px;line-height:17.88px;color:#cccccc;">Default Approvals</span><svg class="b" style="left:1803px;top:1007.8px;" width="10" height="6.5" viewBox="0 0 10 6.5"><path d="M0.6 0.7 4.7 4.8 8.8 0.7" fill="none" stroke="#9a9a9a" stroke-width="1.2"/></svg><div class="b" style="left:0px;top:44px;width:2px;height:60px;background:#ffffff;"></div><svg class="b" style="left:0px;top:0px;" width="60" height="1030" viewBox="0 0 60 1030"><path d="M22.8 59.9H34.4L41 66.5V82Q41 84.2 38.8 84.2H22.8Q20.6 84.2 20.6 82V62.1Q20.6 59.9 22.8 59.9z" fill="none" stroke="#fff" stroke-width="2.2" stroke-linejoin="round"/><path d="M34 60.3V65.2Q34 67 35.8 67H40.6" fill="none" stroke="#fff" stroke-width="2.2"/><path d="M17.2 64.5V84.4Q17.2 88.2 21 88.2H36.6" fill="none" stroke="#fff" stroke-width="2.2" stroke-linecap="round"/><circle cx="27.3" cy="131.5" r="9.9" fill="none" stroke="#858585" stroke-width="1.6"/><path d="M34.4 138.6 43 146.6" stroke="#858585" stroke-width="1.6"/><circle cx="23.3" cy="183.2" r="3.7" fill="none" stroke="#858585" stroke-width="1.6"/><circle cx="23.3" cy="204.8" r="3.7" fill="none" stroke="#858585" stroke-width="1.6"/><circle cx="36.7" cy="188.7" r="3.7" fill="none" stroke="#858585" stroke-width="1.6"/><path d="M23.3 187V201M36.7 192.4Q36.4 196.6 31.8 196.6H27Q23.3 196.6 23.3 200" fill="none" stroke="#858585" stroke-width="1.6"/><path d="M21.1 252.4V245.2Q21.1 242 23.9 243.4L40 252Q41.6 252.9 40 253.8L31 259.9" fill="none" stroke="#858585" stroke-width="1.7" stroke-linecap="round"/><path d="M18.5 259.4Q18.5 254.4 22.7 254.4T26.9 259.4V262.4Q26.9 266.8 22.7 266.8T18.5 262.4z M18.5 259.8H26.9" fill="none" stroke="#858585" stroke-width="1.5"/><path d="M18.4 258.4 15 256.2M27 258.4 30.4 256.2M18.4 262.3H14.9M27 262.3H30.5M19.2 265.6 15 268.6M26.2 265.6 30.4 268.6" stroke="#858585" stroke-width="1.4"/><path d="M27 319.6H19.2Q16.1 319.6 16.1 316.5V305.2Q16.1 302.1 19.2 302.1H35Q38.1 302.1 38.1 305.2V311.4" fill="none" stroke="#858585" stroke-width="1.7"/><path d="M23.8 320V323.8M18.9 323.9H27" stroke="#858585" stroke-width="1.6"/><circle cx="36.2" cy="320" r="8.4" fill="#8a8a8a"/><path d="M31.9 318.8 35.7 321.8 31.9 324.8M40.6 315.2 36.8 318.2 40.6 321.2" fill="none" stroke="#333" stroke-width="1.6"/><path d="M28.4 363.2H19.4Q17.2 363.2 17.2 365.4V384.4Q17.2 386.6 19.4 386.6H38Q40.2 386.6 40.2 384.4V375.6M17.2 374.8H40.2M28.4 363.2V386.6" fill="none" stroke="#858585" stroke-width="1.6"/><rect x="31" y="362.3" width="10.6" height="10.6" rx="1.6" transform="rotate(45 36.3 367.6)" fill="#333" stroke="#858585" stroke-width="1.6"/><circle cx="40" cy="384" r="10" fill="#b5851a"/><path d="M40 377.2 46.4 389H33.6z" fill="none" stroke="#fff" stroke-width="1.5" stroke-linejoin="round"/><path d="M40 381.2V385.4M40 386.6V388" stroke="#fff" stroke-width="1.4"/><path d="M20.6 447.6V421.4Q20.6 419.4 22.6 419.4H37.4Q39.4 419.4 39.4 421.4V447.6L30 440.4z" fill="none" stroke="#858585" stroke-width="1.6" stroke-linejoin="round"/><path d="M29.9 479.2 42.4 485.9V501.2L29.9 508.2 17.6 501.2V485.9z" fill="none" stroke="#858585" stroke-width="1.6" stroke-linejoin="round"/><path d="M24.2 482.4V504.4M24.2 482.4 42.2 493.6 24.8 504.4" fill="none" stroke="#858585" stroke-width="1.4" stroke-linejoin="round"/><path d="M16.6 548 31.8 542 43.4 548V558.8L28 566 16.6 561z M16.6 548 28 553.4 43.4 548M28 553.4V566" fill="none" stroke="#858585" stroke-width="1.6" stroke-linejoin="round"/><path d="M22.6 551V563.6M31.6 554.2V562.4M34.6 553V561M37.6 551.8V559.6M40.4 550.8V558.4" stroke="#858585" stroke-width="1.3"/><rect x="20.6" y="602.4" width="9.2" height="8.2" rx="3" fill="none" stroke="#858585" stroke-width="2.3"/><rect x="31" y="602.4" width="8.8" height="8.2" rx="3" fill="none" stroke="#858585" stroke-width="2.3"/><path d="M38.4 611H40.4Q43.4 613 43 617Q42.4 620.4 38.4 621.4z" fill="#858585"/><path d="M41.6 619.4Q38 622.8 31 622.6Q26.4 622.4 23.6 621" fill="none" stroke="#858585" stroke-width="2.2" stroke-linecap="round"/><path d="M27.1 614.4V618.6M32.9 614.4V618.6" stroke="#858585" stroke-width="1.9"/><path d="M15.6 617.6 19.5 613.4 23.6 617.6M19.6 614V619.4Q19.8 624.6 25.4 625.2" fill="none" stroke="#858585" stroke-width="1.9" stroke-linecap="round" stroke-linejoin="round"/><circle cx="30" cy="940" r="12.6" fill="none" stroke="#858585" stroke-width="1.6"/><circle cx="30" cy="935.2" r="4.2" fill="#858585"/><path d="M22.8 943.2Q22.8 940.4 25.6 940.4H34.4Q37.2 940.4 37.2 943.2Q37 950.6 30 950.6T22.8 943.2z" fill="#858585"/><circle cx="40" cy="950" r="10" fill="#0078d4"/><path d="M27.30 991.37 L27.87 987.60 L32.33 987.60 L32.90 991.37 L36.17 993.26 L39.72 991.87 L41.96 995.73 L38.97 998.11 L38.97 1001.89 L41.96 1004.27 L39.72 1008.13 L36.17 1006.74 L32.90 1008.63 L32.33 1012.40 L27.87 1012.40 L27.30 1008.63 L24.03 1006.74 L20.48 1008.13 L18.24 1004.27 L21.23 1001.89 L21.23 998.11 L18.24 995.73 L20.48 991.87 L24.03 993.26z" fill="none" stroke="#858585" stroke-width="1.8" stroke-linejoin="round"/><circle cx="30.1" cy="1000" r="3.40" fill="none" stroke="#858585" stroke-width="1.8"/></svg><span class="t" style="left:37.6px;top:943.04px;font-size:11.5px;line-height:14.95px;color:#fff;font-weight:700;">1</span><svg class="b" style="left:0px;top:0px;" width="1920" height="1030" viewBox="0 0 1920 1030"><path d="M884 957.8V997.4A16.8 16.8 0 1 1 868.5 980.7" fill="none" stroke="#636363" stroke-width="10.6" stroke-linecap="round"/><path d="M883 1006.9H1042" fill="none" stroke="#636363" stroke-width="11"/><circle cx="921.3" cy="991.1" r="15.1" fill="none" stroke="#636363" stroke-width="10.6"/><circle cx="914.1" cy="959" r="7" fill="#636363"/><circle cx="930" cy="959" r="7" fill="#636363"/><circle cx="953.8" cy="973.3" r="6.9" fill="#636363"/><circle cx="970.1" cy="973.3" r="6.9" fill="#636363"/><path d="M1017.3 983.6L1014.6999999999999 1006" fill="none" stroke="#636363" stroke-width="10.6" stroke-linecap="round"/><path d="M1000.1 986.6L997.5 1006" fill="none" stroke="#636363" stroke-width="10.6" stroke-linecap="round"/><path d="M983.4 990.8L980.8 1006" fill="none" stroke="#636363" stroke-width="10.6" stroke-linecap="round"/><circle cx="1053.5" cy="997.6" r="16.3" fill="none" stroke="#636363" stroke-width="10.6"/><path d="M924.6 1025V1031M982.6 1025V1031" stroke="#636363" stroke-width="4" stroke-linecap="round"/></svg><div class="b" style="left:0px;top:1030px;width:1920px;height:50px;background:#d6d6d6;"></div><div class="b" style="left:61px;top:1031px;width:358px;height:48px;background:#ffffff;"></div><div class="b" style="left:1099px;top:1030px;width:60px;height:50px;background:#f3f3f3;"></div><svg class="b" style="left:20px;top:1045px;" width="20" height="20" viewBox="0 0 20 20"><path d="M0 2.9 8.2 1.8V9.5H0zM9.3 1.6 20 0V9.5H9.3zM0 10.6H8.2V18.3L0 17.2zM9.3 10.6H20V20L9.3 18.4z" fill="#000"/></svg><svg class="b" style="left:74px;top:1044px;" width="23" height="22" viewBox="0 0 23 22"><circle cx="13.8" cy="8.3" r="6.6" fill="none" stroke="#111" stroke-width="1.5"/><path d="M9.2 13 1.4 20.6" stroke="#111" stroke-width="1.6"/></svg><span class="t" style="left:110.8px;top:1043.51px;font-size:18.75px;line-height:24.38px;color:#1b1b1b;transform:scaleX(0.9805);">Type here to search</span><svg class="b" style="left:330px;top:1031px;" width="80" height="48" viewBox="0 0 80 48"><path d="M30.50 10.80 L34.18 19.22 L42.60 22.90 L34.18 26.58 L30.50 35.00 L26.82 26.58 L18.40 22.90 L26.82 19.22z" fill="#fbc21c" stroke="#fbc21c" stroke-width="4.2" stroke-linejoin="round"/><path d="M58.75 22.90 L60.31 26.84 L64.25 28.40 L60.31 29.96 L58.75 33.90 L57.19 29.96 L53.25 28.40 L57.19 26.84z" fill="#fbc21c" stroke="#fbc21c" stroke-width="2.2" stroke-linejoin="round"/><path d="M7.47 29.86 L7.45 33.23 L10.04 35.37 L6.67 35.35 L4.53 37.94 L4.55 34.57 L1.96 32.43 L5.33 32.45z" fill="#2d9cf0" stroke="#2d9cf0" stroke-width="1.8" stroke-linejoin="round"/><circle cx="50.8" cy="11.4" r="2.3" fill="#e03a24"/><circle cx="73.6" cy="35.8" r="2.5" fill="#9aaa38"/></svg><svg class="b" style="left:438px;top:1043px;" width="24" height="23" viewBox="0 0 24 23"><path d="M2.9 2V21.1M14.2 2V21.1" stroke="#111" stroke-width="1.3"/><path d="M2.9 5.6H14.2M2.9 7.9H14.2M2.9 15.2H14.2M2.9 17.5H14.2" stroke="#111" stroke-width="1.05"/><path d="M20.4 2.3V7.4M20.4 12.1V21.1" stroke="#111" stroke-width="1.3"/><rect x="19" y="8.2" width="2.8" height="2.8" fill="#111"/></svg><div class="b" style="left:737px;top:1077px;width:51px;height:3px;background:#0078d7;"></div><div class="b" style="left:1099px;top:1077px;width:60px;height:3px;background:#0078d7;"></div><div class="b" style="left:1165px;top:1077px;width:50px;height:3px;background:#0078d7;"></div><div class="b" style="left:1287px;top:1077px;width:50px;height:3px;background:#0078d7;"></div><div class="b" style="left:1348px;top:1077px;width:50px;height:3px;background:#0078d7;"></div><div class="b" style="left:1409px;top:1077px;width:50px;height:3px;background:#0078d7;"></div><div class="b" style="left:1470px;top:1077px;width:50px;height:3px;background:#0078d7;"></div><svg class="b" style="left:499px;top:1040px;" width="30" height="30" viewBox="0 0 30 30"><circle cx="14.75" cy="14.6" r="13.2" fill="#222" stroke="#f4f4f4" stroke-width="1.3"/><g transform="translate(14.75 14.6) rotate(0) translate(0.6 0)"><path d="M-4.6 -8.6Q-6 -2.6 0.4 -1.2" fill="none" stroke="#d9d9d9" stroke-width="2.5" stroke-linecap="round"/></g><g transform="translate(14.75 14.6) rotate(120) translate(0.6 0)"><path d="M-4.6 -8.6Q-6 -2.6 0.4 -1.2" fill="none" stroke="#d9d9d9" stroke-width="2.5" stroke-linecap="round"/></g><g transform="translate(14.75 14.6) rotate(240) translate(0.6 0)"><path d="M-4.6 -8.6Q-6 -2.6 0.4 -1.2" fill="none" stroke="#d9d9d9" stroke-width="2.5" stroke-linecap="round"/></g></svg><svg class="b" style="left:560px;top:1039px;" width="32" height="32" viewBox="0 0 32 32"><path d="M8.4 6V3.4Q8.4 2 9.8 2H21.4Q22.8 2 22.8 3.4V6" fill="none" stroke="#2fa4f3" stroke-width="2"/><path d="M1.3 4.8H30V27.4Q30 30.6 26.8 30.6H4.5Q1.3 30.6 1.3 27.4z" fill="#1b5dab"/><path d="M1.3 20H30V27.4Q30 30.6 26.8 30.6H4.5Q1.3 30.6 1.3 27.4z" fill="#19529b"/><path d="M15.6 10.6V23.4M9.4 18 15.6 24.4 21.8 18" fill="none" stroke="#fff" stroke-width="3.2" stroke-linecap="round" stroke-linejoin="round"/></svg><svg class="b" style="left:623px;top:1040px;" width="30" height="30" viewBox="0 0 30 30"><rect width="30" height="30" rx="2.2" fill="#1e1e1e"/><path d="M11.6 5.2H15V11.8H11.6A3.3 3.3 0 0 1 11.6 5.2z" fill="#ee3a24"/><path d="M15 5.2H18.3A3.3 3.3 0 0 1 18.3 11.8H15z" fill="#f4623a"/><path d="M11.6 11.8H15V18.4H11.6A3.3 3.3 0 0 1 11.6 11.8z" fill="#a259ff"/><circle cx="18.3" cy="15.1" r="3.3" fill="#1ea7f5"/><path d="M11.6 18.4H15V21.7A3.3 3.3 0 1 1 11.6 18.4z" fill="#1f9d55"/></svg><svg class="b" style="left:687px;top:1042.5px;" width="26" height="25" viewBox="0 0 26 25"><rect x="0.5" y="0.5" width="25" height="24" rx="4" fill="#2f66e8"/><rect x="5.5" y="5.5" width="15" height="14" fill="#e8eefc"/><path d="M10.4 9.8 15.6 15M15.6 9.8 10.4 15" stroke="#2f55c8" stroke-width="1.6"/><path d="M5.5 4.2H20.5M5.5 20.8H20.5" stroke="#17379a" stroke-width="1.6" stroke-dasharray="1.6 1.4"/></svg><svg class="b" style="left:745px;top:1039px;" width="32" height="32" viewBox="0 0 32 32"><path d="M16 2.2A13 13 0 0 0 4.6 21.6L2.6 28.8 10 26.8A13 13 0 1 0 16 2.2z" fill="none" stroke="#1f9a4e" stroke-width="3" stroke-linejoin="round"/><path d="M11.4 8.8Q10 9.4 10 11.6Q10.4 15.4 14 18.6Q17.6 21.6 20.6 21.4Q22.6 20.8 22.8 19.2L19.8 17.6 18.4 19Q15.4 17.8 13.6 14.6L14.8 13.2 13.4 9.2z" fill="#1f9a4e"/></svg><div class="b" style="left:765.7px;top:1052.2px;width:24px;height:24px;background:#dcdcdc;border:1px solid #555;border-radius:12px;box-sizing:border-box;"></div><span class="t" style="left:769.6px;top:1054.85px;font-size:15.5px;line-height:20.15px;color:#000;transform:scaleX(0.9570);">29</span><svg class="b" style="left:800px;top:1030px;" width="700" height="50" viewBox="0 0 700 50"><circle cx="24" cy="24.8" r="14.6" fill="#f8bf12"/><path d="M24.00 17.95L37.23 17.95A14.9 14.9 0 0 1 23.32 39.68L29.94 28.23z" fill="#fbc116"/><path d="M29.94 28.23L23.32 39.68A14.9 14.9 0 0 1 11.45 16.77L18.06 28.23z" fill="#1f9d4d"/><path d="M18.06 28.23L11.45 16.77A14.9 14.9 0 0 1 37.23 17.95L24.00 17.95z" fill="#e23a2c"/><circle cx="24" cy="24.8" r="6.85" fill="#fff"/><circle cx="24" cy="24.8" r="5.44" fill="#3b7fee"/><circle cx="389.6" cy="24.2" r="14.399999999999999" fill="#f8bf12"/><path d="M389.60 17.44L402.65 17.44A14.7 14.7 0 0 1 388.93 38.88L395.46 27.58z" fill="#fbc116"/><path d="M395.46 27.58L388.93 38.88A14.7 14.7 0 0 1 377.22 16.28L383.74 27.58z" fill="#1f9d4d"/><path d="M383.74 27.58L377.22 16.28A14.7 14.7 0 0 1 402.65 17.44L389.60 17.44z" fill="#e23a2c"/><circle cx="389.6" cy="24.2" r="6.76" fill="#fff"/><circle cx="389.6" cy="24.2" r="5.37" fill="#3b7fee"/><circle cx="397.1" cy="31.75" r="10" fill="#8453cc"/><circle cx="511.9" cy="24.6" r="14.399999999999999" fill="#f8bf12"/><path d="M511.90 17.84L524.95 17.84A14.7 14.7 0 0 1 511.23 39.28L517.76 27.98z" fill="#fbc116"/><path d="M517.76 27.98L511.23 39.28A14.7 14.7 0 0 1 499.52 16.68L506.04 27.98z" fill="#1f9d4d"/><path d="M506.04 27.98L499.52 16.68A14.7 14.7 0 0 1 524.95 17.84L511.90 17.84z" fill="#e23a2c"/><circle cx="511.9" cy="24.6" r="6.76" fill="#fff"/><circle cx="511.9" cy="24.6" r="5.37" fill="#3b7fee"/><circle cx="518.8" cy="31.7" r="10" fill="#155c9e"/><circle cx="572.3" cy="24.6" r="14.399999999999999" fill="#f8bf12"/><path d="M572.30 17.84L585.35 17.84A14.7 14.7 0 0 1 571.63 39.28L578.16 27.98z" fill="#fbc116"/><path d="M578.16 27.98L571.63 39.28A14.7 14.7 0 0 1 559.92 16.68L566.44 27.98z" fill="#1f9d4d"/><path d="M566.44 27.98L559.92 16.68A14.7 14.7 0 0 1 585.35 17.84L572.30 17.84z" fill="#e23a2c"/><circle cx="572.3" cy="24.6" r="6.76" fill="#fff"/><circle cx="572.3" cy="24.6" r="5.37" fill="#3b7fee"/><circle cx="580.6" cy="32" r="10" fill="#3a3a40"/><circle cx="579" cy="29" r="3.4" fill="#d9739a"/><rect x="581" y="31" width="4" height="8" rx="1.5" fill="#e6e6ea"/><circle cx="576" cy="35" r="2.6" fill="#7a6a8c"/></svg><span class="t" style="left:1192.6px;top:1053.95px;font-size:13px;line-height:16.9px;color:#cdb8f2;font-weight:700;">C</span><span class="t" style="left:1313px;top:1054.15px;font-size:13px;line-height:16.9px;color:#9ad0f5;font-weight:700;">M</span><svg class="b" style="left:871px;top:1040.5px;" width="28" height="27" viewBox="0 0 28 27"><rect width="28" height="27" rx="4.5" fill="#00005b"/></svg><span class="t" style="left:877.3px;top:1043.26px;font-size:16.6px;line-height:21.58px;color:#9c9cff;font-weight:700;transform:scaleX(0.9582);">Pr</span><svg class="b" style="left:930px;top:1041px;" width="28" height="28" viewBox="0 0 28 28"><rect x="6" y="0.5" width="21" height="27" rx="3" fill="#2b7cd3"/><path d="M6 3.5Q6 0.5 9 0.5H24Q27 0.5 27 3.5V8H6z" fill="#41a5ee"/><path d="M6 8H27V15H6z" fill="#2b7cd3"/><path d="M6 15H27V21H6z" fill="#185abd"/><path d="M6 21H27V24.5Q27 27.5 24 27.5H9Q6 27.5 6 24.5z" fill="#103f91"/><rect x="0.5" y="12.5" width="14" height="14" rx="2.5" fill="#1b3fa6"/><path d="M3.3 16 5.3 23 7.5 17.4 9.7 23 11.7 16" fill="none" stroke="#fff" stroke-width="1.6" stroke-linejoin="round"/></svg><svg class="b" style="left:992px;top:1040px;" width="30" height="29" viewBox="0 0 30 29"><path d="M3.6 4Q3.6 0.9 11.4 0.9T19.2 4V16.6Q19.2 19.8 11.4 19.8T3.6 16.6z" fill="#fbd673"/><ellipse cx="11.4" cy="4" rx="7.8" ry="3" fill="#eac352"/><path d="M24 1.6H28.6V6.2M1.4 22.6V27.4H6" fill="none" stroke="#2d8a3e" stroke-width="2"/><path d="M12.5 15.5 24.5 27.5M24.5 15.5 12.5 27.5" stroke="#a06ad6" stroke-width="2"/><circle cx="12.8" cy="15.8" r="2.3" fill="none" stroke="#a06ad6" stroke-width="1.6"/><circle cx="24.2" cy="15.8" r="2.3" fill="none" stroke="#a06ad6" stroke-width="1.6"/></svg><svg class="b" style="left:1053px;top:1044px;" width="30" height="22" viewBox="0 0 30 22"><rect width="30" height="22" rx="5.5" fill="#ff0f3a"/><path d="M12 6.2 20 11 12 15.8z" fill="#fff"/></svg><svg class="b" style="left:1115px;top:1039px;" width="32" height="32" viewBox="0 0 32 32"><circle cx="16.25" cy="12.6" r="10.3" fill="none" stroke="#c6431f" stroke-width="1.5"/><path d="M8.6 5.4A10.3 10.3 0 1 1 21.6 21.4" fill="none" stroke="#c6431f" stroke-width="4.4"/><path d="M15.5 2.6 19.6 13 14.6 21 11.6 19.4z" fill="#8f959b"/><path d="M15.9 2.6 21.4 12.4 18.4 20.6 15.4 16.8z" fill="#d7dbdf"/><circle cx="6.3" cy="23" r="3.3" fill="none" stroke="#1a5fb4" stroke-width="2.7"/><circle cx="16.9" cy="26.8" r="3.3" fill="none" stroke="#2a9df4" stroke-width="2.7"/></svg><svg class="b" style="left:1235px;top:1039px;" width="32" height="32" viewBox="0 0 32 32"><path d="M23 1.5 30.5 4.6V27.4L23 30.5z" fill="#c9a4f2"/><path d="M23 1.5 8 16 23 30.5V22.4L15.8 16 23 9.6z" fill="#9b6bdc"/><path d="M1.5 9.4 4.6 7.8 23 22.4V30.5L1.5 11.6z" fill="#7d4fc4"/><path d="M1.5 22.6 4.6 24.2 23 9.6V1.5L1.5 20.4z" fill="#8a5ad0"/><path d="M1.5 9.4V22.6L4.4 20.4V11.6z" fill="#6a3fb0"/></svg><svg class="b" style="left:1420px;top:1042px;" width="29" height="24" viewBox="0 0 29 24"><path d="M0.5 2Q0.5 0.5 2 0.5H10L12.5 3H27Q28.5 3 28.5 4.5V22Q28.5 23.5 27 23.5H2Q0.5 23.5 0.5 22z" fill="#f7c64a"/><path d="M0.5 6.5H28.5V22Q28.5 23.5 27 23.5H2Q0.5 23.5 0.5 22z" fill="#fcd978"/><path d="M5.6 23.5V15.6Q5.6 13.6 7.6 13.6H21.4Q23.4 13.6 23.4 15.6V23.5H18.4V18.4H10.6V23.5z" fill="#3d8be0"/><rect x="1" y="1" width="8.6" height="1.6" fill="#d99a1c"/></svg><svg class="b" style="left:1479px;top:1039px;" width="32" height="32" viewBox="0 0 32 32"><path d="M23.2 1.5 30.5 5V27L23.2 30.5z" fill="#2aa7f5"/><path d="M23.2 1.5 8.4 16 23.2 30.5V22.2L15.6 16 23.2 9.8z" fill="#1f8ad8"/><path d="M1.6 10 4.4 8 23.2 22.2V30.5L1.6 12.4z" fill="#1478c4"/><path d="M1.6 22 4.4 24 23.2 9.8V1.5L1.6 19.6z" fill="#1e90e0"/></svg><svg class="b" style="left:1541px;top:1042px;" width="32" height="30" viewBox="0 0 32 30"><circle cx="14.5" cy="14" r="12.8" fill="#fff"/><circle cx="14.5" cy="14" r="10.6" fill="#1e7fe0"/><circle cx="23.6" cy="20.4" r="6" fill="#f5a81c"/><path d="M23.6 17.4V21.2M23.6 22.4V23.6" stroke="#fff" stroke-width="1.3" stroke-dasharray="1 0.6"/></svg><span class="t" style="left:1550.3px;top:1041.58px;font-size:22px;line-height:28.6px;color:#fff;font-weight:700;transform:scaleX(0.7069);">?</span><svg class="b" style="left:1581px;top:1049px;" width="18" height="11" viewBox="0 0 18 11"><path d="M1 9.6 9 1.6 17 9.6" fill="none" stroke="#111" stroke-width="1.5"/></svg><svg class="b" style="left:1610px;top:1044.6px;" width="20" height="20" viewBox="0 0 20 20"><circle cx="10" cy="10" r="8.3" fill="none" stroke="#111" stroke-width="1.6"/><circle cx="10" cy="10" r="4.2" fill="#111"/></svg><svg class="b" style="left:1641px;top:1046px;" width="20" height="19" viewBox="0 0 20 19"><g fill="none" stroke="#222" stroke-width="1.3"><path d="M2.2 16.6A14.4 14.4 0 0 1 16.6 2.2"/><path d="M6.2 16.6A10.4 10.4 0 0 1 16.6 6.2"/><path d="M10.2 16.6A6.4 6.4 0 0 1 16.6 10.2"/></g><circle cx="15.4" cy="15.6" r="1.6" fill="#222"/></svg><svg class="b" style="left:1669px;top:1047px;" width="20" height="16" viewBox="0 0 20 16"><path d="M1.2 5.2H4.4L8.6 1.2V14.6L4.4 10.6H1.2z" fill="none" stroke="#111" stroke-width="1.3" stroke-linejoin="round"/><path d="M12 5 18 11M18 5 12 11" stroke="#111" stroke-width="1.3"/></svg><svg class="b" style="left:1699px;top:1047px;" width="22" height="15" viewBox="0 0 22 15"><rect x="4.6" y="3.4" width="14.8" height="9" fill="none" stroke="#111" stroke-width="1.2"/><rect x="6.2" y="5" width="11.6" height="5.8" fill="#111"/><path d="M19.8 6V10" stroke="#111" stroke-width="1.6"/><path d="M2 1V3.4M4.4 1V3.4M1 3.4H5.4V5.4Q5.4 7 3.2 7T1 5.4zM3.2 7V9.5H5" fill="none" stroke="#111" stroke-width="1"/></svg><svg class="b" style="left:1742px;top:1051px;" width="11" height="15" viewBox="0 0 11 15"><path d="M8.4 2.6Q6.4 0.8 4.2 1.6Q2.2 2.8 3.6 4.8Q4.6 5.8 6.6 5.6Q2.4 6 1.6 8.8Q1.2 12.2 5 12.8Q7.4 13 9.2 12.2" fill="none" stroke="#111" stroke-width="1.3" stroke-linecap="round"/></svg><span class="t" style="left:1786.3px;top:1034.25px;font-size:15px;line-height:19.5px;color:#111;transform:scaleX(0.9201);">4:41 PM</span><span class="t" style="left:1779px;top:1057.15px;font-size:15px;line-height:19.5px;color:#111;">3/23/2026</span><svg class="b" style="left:1869px;top:1045px;" width="22" height="21" viewBox="0 0 22 21"><path d="M0.5 0.5H20V14.5H12L9.2 18 6.4 14.5H0.5z" fill="#111"/><path d="M4 4.6H16.4M4 7.6H16.4M4 10.6H11" stroke="#d9d9d9" stroke-width="1.1"/><circle cx="16.4" cy="15.4" r="4.4" fill="#111"/><path d="M17.6 12.4A3.3 3.3 0 1 1 13.4 16.6" fill="none" stroke="#d6d6d6" stroke-width="1.1"/><path d="M17.6 12.4A3.6 3.6 0 0 0 13.4 16.6" fill="none" stroke="#d6d6d6" stroke-width="0.9"/></svg><div class="b" style="left:1914px;top:1030px;width:1px;height:50px;background:#9a9a9a;"></div><span class="t" style="left:845px;top:1015.62px;font-size:35px;line-height:45.5px;color:rgba(0,0,0,0.045);font-weight:700;transform:scaleX(1.0654);">mostaql.com</span></body></html>
